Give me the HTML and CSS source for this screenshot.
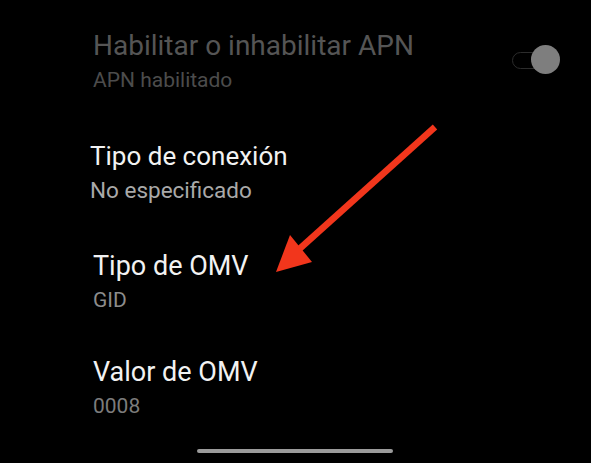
FILE: index.html
```html
<!DOCTYPE html>
<html lang="es">
<head>
<meta charset="utf-8">
<title>APN</title>
<link rel="stylesheet" href="styles.css">
</head>
<body>
<div class="screen">
  <ul class="list">
    <li class="item item-toggle disabled">
      <div class="texts">
        <div class="title">Habilitar o inhabilitar APN</div>
        <div class="summary">APN habilitado</div>
      </div>
      <div class="switch"><span class="track"></span><span class="thumb"></span></div>
    </li>
    <li class="item item-shift">
      <div class="texts">
        <div class="title">Tipo de conexión</div>
        <div class="summary bright">No especificado</div>
      </div>
    </li>
    <li class="item">
      <div class="texts">
        <div class="title">Tipo de OMV</div>
        <div class="summary mid">GID</div>
      </div>
    </li>
    <li class="item item-last">
      <div class="texts">
        <div class="title">Valor de OMV</div>
        <div class="summary dim">0008</div>
      </div>
    </li>
  </ul>
  <svg class="arrow" width="591" height="463" viewBox="0 0 591 463">
    <line x1="435" y1="127" x2="296" y2="252" stroke="#f2361c" stroke-width="6.5"/>
    <polygon points="276,272 290,235 312,262" fill="#f2361c"/>
  </svg>
  <div class="home-bar"></div>
</div>
</body>
</html>
```
FILE: styles.css
```css
html, body {
  margin: 0;
  padding: 0;
  background: #000;
}
.screen {
  position: relative;
  width: 591px;
  height: 463px;
  overflow: hidden;
  background: #000;
  font-family: Roboto, "Noto Sans", "Liberation Sans", sans-serif;
}
.list {
  list-style: none;
  margin: 0;
  padding: 30px 0 0 93px;
  display: flex;
  flex-direction: column;
}
.item {
  height: 110px;
  display: flex;
  align-items: flex-start;
}
.item-shift {
  margin-left: -3px;
}
.item-shift .title {
  font-size: 26px;
}
.item-last {
  margin-top: -4px;
}
.texts {
  display: flex;
  flex-direction: column;
  gap: 5px;
}
.title {
  font-size: 27px;
  line-height: 32px;
  color: #f2f2f2;
}
.disabled .title {
  font-size: 28px;
}
.summary {
  font-size: 21px;
  line-height: 26px;
  color: #9a9a9a;
}
.summary.bright { color: #a9a9a9; font-size: 22.5px; }
.summary.mid { color: #8c8c8c; }
.summary.dim { color: #7c7c7c; }
.disabled .title { color: #555555; }
.disabled .summary { color: #4c4c4c; }
.item-toggle {
  justify-content: space-between;
  padding-right: 31px;
}
.switch {
  position: relative;
  width: 48px;
  height: 30px;
  margin-top: 15px;
  display: flex;
  align-items: center;
}
.track {
  width: 40px;
  height: 17px;
  box-sizing: border-box;
  border: 1.5px solid #2c2c2c;
  border-radius: 9px;
  background: #000;
}
.thumb {
  position: absolute;
  right: 0;
  top: 0;
  width: 29px;
  height: 29px;
  border-radius: 50%;
  background: #7e7e7e;
}
.arrow {
  position: absolute;
  left: 0;
  top: 0;
}
.home-bar {
  position: absolute;
  left: 197px;
  top: 449px;
  width: 196px;
  height: 4px;
  border-radius: 2px;
  background: #9b9b9b;
}
```
